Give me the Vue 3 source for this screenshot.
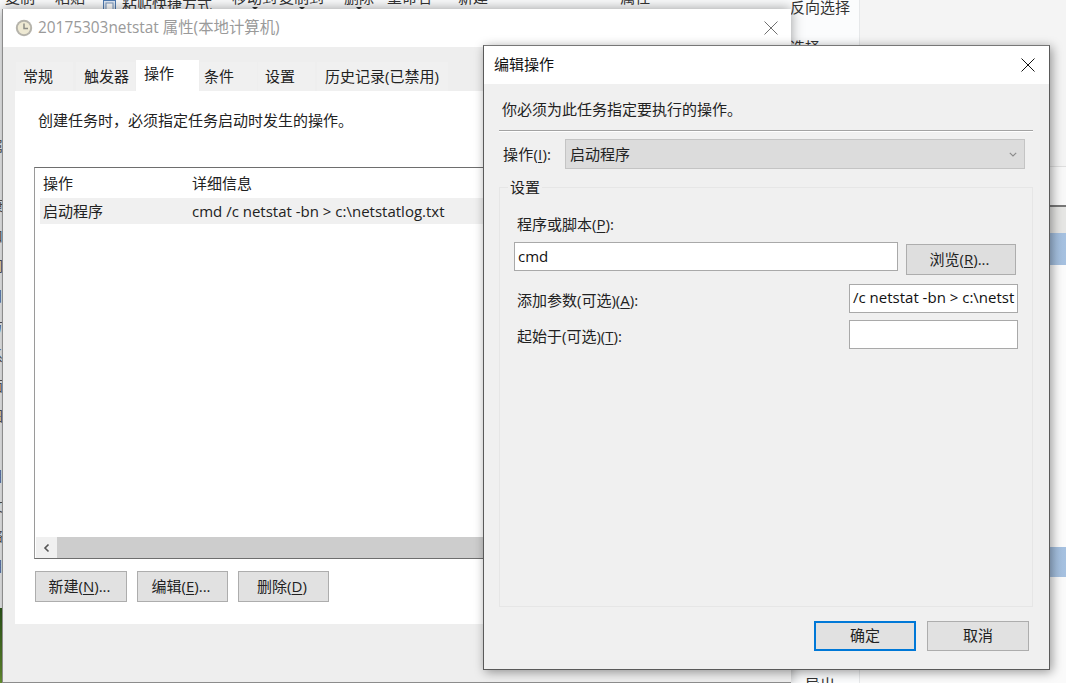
<script setup>
const ribbon = [
  { t: '复制', x: 5 }, { t: '粘贴', x: 20 },
  { t: '粘贴快捷方式', x: 37, low: true, icon: true },
  { t: '移动到', x: 20, arrow: true }, { t: '复制到', x: 2, arrow: true },
  { t: '删除', x: 20, arrow: true }, { t: '重命名', x: 13 }, { t: '新建', x: 26 }, { t: '属性', x: 132 }
]
const strip = ['属', '(', '康', '口', '们', '日', '方', '系', '面', '图', '/', '目', '文', '络', '目']
</script>

<template>
  <div class="root">
    <div class="desk">
      <div class="back">
        <div class="ribbon">
          <span v-for="r in ribbon" :key="r.t" class="rib" :class="{ low: r.low, arrowed: r.arrow }" :style="{ marginLeft: r.x + 'px' }">
            <svg v-if="r.icon" class="rib-icon" width="13" height="12" viewBox="0 0 13 12">
              <rect x=".5" y=".5" width="12" height="11" fill="#dfe9f5" stroke="#4f7cb3" />
              <rect x="3" y="3" width="7" height="8" fill="#fff" stroke="#7b98bd" />
            </svg>{{ r.t }}
          </span>
        </div>
        <div class="side">
          <div class="side-text top">反向选择</div>
          <div class="side-text second">选择</div>
          <div class="side-text last">导出</div>
        </div>
        <div class="strip">
          <span v-for="(c, i) in strip" :key="i" class="strip-c">{{ c }}</span>
        </div>
        <div class="grass"></div>
      </div>
      <div class="far">
        <div class="b1"></div>
        <div class="b2"></div>
        <div class="b3"></div>
        <div class="b4"></div>
        <div class="blue"></div>
        <div class="b5"></div>
        <div class="blue second-blue"></div>
        <div class="b6"></div>
      </div>
    </div>

    <section class="win main">
      <header class="title main-title">
        <svg class="clock" width="18" height="18" viewBox="0 0 18 18">
          <circle cx="9" cy="9" r="8.2" fill="#b5b3ab" />
          <circle cx="9" cy="9" r="6.2" fill="#eee9d3" />
          <path d="M9 4.5V9.4H13" fill="none" stroke="#8d8d86" stroke-width="1.5" />
        </svg>
        <span>20175303netstat 属性(本地计算机)</span>
        <svg class="x main-x" width="14" height="14" viewBox="0 0 14 14">
          <path d="M.5.5l13 13M13.5.5l-13 13" stroke="#707070" stroke-width="1" fill="none" />
        </svg>
      </header>
      <div class="main-body">
        <nav class="tabs">
          <span class="tab t1">常规</span>
          <span class="tab t2">触发器</span>
          <span class="tab on">操作</span>
          <span class="tab t4">条件</span>
          <span class="tab t5">设置</span>
          <span class="tab t6">历史记录(已禁用)</span>
        </nav>
        <div class="panel">
          <p class="lead">创建任务时，必须指定任务启动时发生的操作。</p>
          <div class="table">
            <div class="thead"><span class="c1">操作</span><span>详细信息</span></div>
            <div class="trow"><span class="c1">启动程序</span><span>cmd /c netstat -bn &gt; c:\netstatlog.txt</span></div>
            <div class="scroll">
              <span class="arrow">
                <svg width="9" height="10" viewBox="0 0 9 10"><path d="M6.5 1.5L3 5l3.5 3.5" fill="none" stroke="#555" stroke-width="1.6" /></svg>
              </span>
            </div>
          </div>
          <div class="actions">
            <button class="btn small"><span>新建(<u>N</u>)...</span></button>
            <button class="btn small"><span>编辑(<u>E</u>)...</span></button>
            <button class="btn small"><span>删除(<u>D</u>)</span></button>
          </div>
        </div>
      </div>
    </section>

    <section class="win dialog">
      <header class="title dlg-title">
        <span>编辑操作</span>
        <svg class="x" width="14" height="14" viewBox="0 0 14 14">
          <path d="M.5.5l13 13M13.5.5l-13 13" stroke="#111" stroke-width="1" fill="none" />
        </svg>
      </header>
      <div class="dlg-body">
        <p class="dlg-lead">你必须为此任务指定要执行的操作。</p>
        <div class="sep"></div>
        <div class="op-row">
          <label class="op-label">操作(<u>I</u>):</label>
          <div class="select">
            <span>启动程序</span>
            <svg width="8" height="5" viewBox="0 0 8 5"><path d="M.8.8L4 4l3.2-3.2" fill="none" stroke="#8a8a8a" stroke-width="1.1" /></svg>
          </div>
        </div>
        <div class="group">
          <div class="legend">设置</div>
          <div class="fld-label">程序或脚本(<u>P</u>):</div>
          <div class="prog-row">
            <div class="input prog">cmd</div>
            <button class="btn browse"><span>浏览(<u>R</u>)...</span></button>
          </div>
          <div class="arg-row args">
            <span>添加参数(可选)(<u>A</u>):</span>
            <div class="input arg">/c netstat -bn &gt; c:\netst</div>
          </div>
          <div class="arg-row start">
            <span>起始于(可选)(<u>T</u>):</span>
            <div class="input arg"></div>
          </div>
        </div>
        <div class="dlg-foot">
          <button class="btn foot primary">确定</button>
          <button class="btn foot">取消</button>
        </div>
      </div>
    </section>
  </div>
</template>

<style>
html, body { margin: 0; background: #fff; }
</style>

<style scoped>
.root {
  position: relative;
  width: 1066px;
  height: 683px;
  overflow: hidden;
  font: 15px/20px "Open Sans", "Noto Sans CJK SC", sans-serif;
  color: #222;
}
.desk { display: flex; height: 683px; }
.back { position: relative; width: 860px; background: #fbfcfd; border-right: 1px solid #e6e8ea; box-sizing: border-box; }
.ribbon { display: flex; height: 20px; margin-top: -13px; white-space: nowrap; }
.rib { flex: none; color: #333; position: relative; }
.low { margin-top: 7px; height: 15px; overflow: visible; }
.rib-icon { position: absolute; left: -19px; top: 6px; }
.arrowed::after {
  content: ""; position: absolute; left: 50%; top: 20px; margin-left: -3px;
  border: 3px solid transparent; border-top-color: #333; border-bottom: 0;
}
.side { position: absolute; left: 790px; top: 0; bottom: 0; width: 60px; }
.side-text { position: absolute; left: 0; color: #333; white-space: nowrap; }
.side-text.top { top: -3px; }
.side-text.second { top: 37px; }
.side-text.last { top: 674px; left: 15px; }
.strip { position: absolute; left: 0; top: 131px; width: 2px; overflow: hidden; display: flex; flex-direction: column; }
.strip-c { display: block; height: 30px; line-height: 30px; margin-left: -11px; width: 15px; color: #555; font-size: 14px; }
.grass { position: absolute; left: 0; top: 608px; width: 3px; height: 75px; background: linear-gradient(#2f5c1b, #6d9a34); }

.far { flex: 1; display: flex; flex-direction: column; background: #fff; }
.b1 { height: 167px; background: #f4f4f4; border-bottom: 1px solid #dedede; box-sizing: border-box; }
.b2 { height: 38px; background: #f8f8f8; }
.b3 { height: 2px; background: #777; }
.b4 { height: 26px; background: #e6e6e4; }
.blue { height: 32px; background: linear-gradient(90deg, #89abd0, #a6c1e0); }
.b5 { height: 282px; background: #fbfbfb; }
.second-blue { height: 30px; }
.b6 { flex: 1; background: #fafafa; }

.win { position: absolute; box-sizing: border-box; display: flex; flex-direction: column; }
.title { display: flex; align-items: center; flex: none; height: 38px; background: #fff; }
.x { margin-left: auto; }
button { font: inherit; color: inherit; padding: 0; }
u { text-underline-offset: 2px; }
p { margin: 0; }

.main {
  left: 2px; top: 9px; width: 789px; height: 674px;
  border-left: 1px solid #8c8c8c; border-bottom: 1px solid #8c8c8c;
  background: #eee;
  box-shadow: 0 0 12px rgba(0, 0, 0, .4);
}
.main-title { padding-left: 12px; color: #9a9a9a; font-size: 15.4px; }
.clock { margin-right: 5px; }
.main-x { margin-right: 13px; }
.main-body { flex: 1; padding: 13px 12px 0; display: flex; flex-direction: column; }
.tabs { display: flex; align-items: flex-end; height: 31px; flex: none; }
.tab { height: 29px; line-height: 28px; background: #f0f0f0; box-sizing: border-box; white-space: nowrap; }
.t1 { width: 57px; margin: 0 3px 0 1px; padding-left: 7px; }
.t2 { width: 59px; margin-right: 1px; padding-left: 8px; }
.on { width: 63px; height: 31px; line-height: 27px; background: #fff; margin-right: 1px; padding-left: 8px; }
.t4 { width: 57px; margin-right: 1px; padding-left: 4px; }
.t5 { width: 57px; margin-right: 2px; padding-left: 7px; }
.t6 { width: 131px; padding-left: 8px; }
.panel { width: 763px; height: 533px; flex: none; background: #fff; padding: 19px 0 0 19px; box-sizing: border-box; }
.lead { padding-left: 4px; }
.table {
  margin-top: 37px; height: 392px; width: 726px; box-sizing: border-box;
  border: 1px solid #6e6e6e; border-left-color: #9a9a9a;
  display: flex; flex-direction: column; padding-left: 5px;
}
.thead { height: 30px; display: flex; align-items: center; flex: none; }
.trow { height: 26px; display: flex; align-items: center; background: #f0f0f0; flex: none; }
.c1 { width: 152px; padding-left: 3px; box-sizing: border-box; flex: none; }
.scroll { margin: auto 0 0 -4px; height: 21px; background: #cdcdcd; flex: none; }
.arrow { display: flex; align-items: center; justify-content: center; width: 21px; height: 21px; background: #f0f0f0; }
.actions { display: flex; gap: 10px; margin: 12px 0 0 1px; }
.btn { background: #e1e1e1; border: 1px solid #adadad; box-sizing: border-box; display: flex; align-items: center; justify-content: center; padding-bottom: 2px; }
.small { width: 91px; height: 31px; padding-right: 3px; }
.small:first-child { width: 92px; }

.dialog {
  left: 483px; top: 45px; width: 567px; height: 625px;
  border: 1px solid #5a5a5a; border-top-color: #777;
  background: #f0f0f0;
  box-shadow: 2px 2px 10px rgba(0, 0, 0, .4);
}
.dlg-title { padding: 0 14px 2px 10px; box-sizing: border-box; color: #111; }
.dlg-title .x { margin-top: 2px; }
.dlg-body { flex: 1; padding: 15px 16px 0 15px; display: flex; flex-direction: column; min-height: 0; }
.dlg-lead { padding-left: 3px; }
.sep { height: 1px; background: #a3a3a3; margin-top: 11px; box-shadow: 0 1px 0 #fff; flex: none; }
.op-row { display: flex; align-items: center; margin-top: 8px; height: 30px; flex: none; }
.op-label { padding-left: 4px; width: 66px; box-sizing: border-box; flex: none; letter-spacing: .2px; }
.select {
  width: 460px; height: 30px; box-sizing: border-box; background: #dcdcdc; border: 1px solid #c4c4c4;
  display: flex; align-items: center; justify-content: space-between; padding: 0 7px 0 4px;
}
.group {
  margin-top: 18px; height: 420px; flex: none; box-sizing: border-box;
  border: 1px solid #e6e6e6; padding-left: 14px;
}
.legend { width: fit-content; margin: -11px 0 0 -6px; padding: 0 2px; background: #f0f0f0; }
.fld-label { margin: 17px 0 0 3px; }
.prog-row { display: flex; align-items: flex-start; margin-top: 8px; height: 33px; }
.input {
  background: #fff; border: 1px solid #a9a9a9; box-sizing: border-box; height: 29px; line-height: 25px;
  padding-left: 3px; white-space: nowrap; overflow: hidden; flex: none; color: #111;
}
.prog { width: 384px; line-height: 27px; }
.browse { width: 110px; height: 31px; margin: 2px 0 0 8px; background: #dedede; padding-right: 3px; }
.arg-row { display: flex; justify-content: space-between; align-items: center; height: 29px; padding-left: 3px; width: 504px; box-sizing: border-box; }
.args { margin-top: 9px; }
.args > span { margin-top: 3px; }
.start { margin-top: 7px; }
.start > span { margin-top: 3px; }
.arg { width: 169px; }
.dlg-foot { display: flex; justify-content: flex-end; gap: 11px; margin-top: 14px; padding-right: 4px; flex: none; }
.foot { width: 102px; height: 30px; }
.primary { border: 2px solid #0078d7; }
</style>
